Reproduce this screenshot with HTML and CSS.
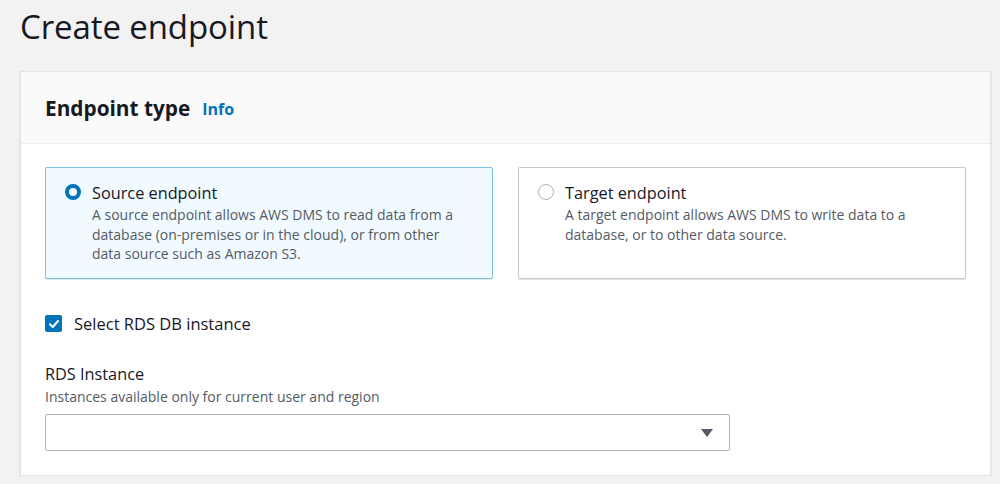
FILE: index.html
```html
<!DOCTYPE html>
<html>
<head>
<meta charset="utf-8">
<link rel="stylesheet" href="styles.css">
</head>
<body>
<div class="page">
  <h1 class="title">Create endpoint</h1>
  <section class="card">
    <header class="card-head">
      <h2>Endpoint type</h2>
      <a class="info">Info</a>
    </header>
    <div class="card-body">
      <div class="tiles">
        <div class="tile selected">
          <span class="radio on"></span>
          <div class="tile-text">
            <div class="tile-title">Source endpoint</div>
            <div class="tile-desc">A source endpoint allows AWS DMS to read data from a database (on-premises or in the cloud), or from other data source such as Amazon S3.</div>
          </div>
        </div>
        <div class="tile">
          <span class="radio"></span>
          <div class="tile-text">
            <div class="tile-title">Target endpoint</div>
            <div class="tile-desc">A target endpoint allows AWS DMS to write data to a database, or to other data source.</div>
          </div>
        </div>
      </div>
      <label class="check">
        <span class="box"><svg width="12" height="12" viewBox="0 0 12 12"><path d="M2 6.2 L4.8 9 L10 3" fill="none" stroke="#fff" stroke-width="2" stroke-linecap="round" stroke-linejoin="round"/></svg></span>
        <span>Select RDS DB instance</span>
      </label>
      <div class="field">
        <div class="field-label">RDS Instance</div>
        <div class="field-hint">Instances available only for current user and region</div>
        <div class="select"><span class="caret"></span></div>
      </div>
    </div>
  </section>
</div>
</body>
</html>
```
FILE: styles.css
```css
html, body {
  margin: 0;
  padding: 0;
  background: #f2f2f3;
  font-family: "Open Sans", "Noto Sans", sans-serif;
  color: #16191f;
}
.page {
  padding: 0 9px 0 20px;
}
.title {
  margin: 0;
  padding-top: 6px;
  height: 65px;
  font-size: 33px;
  font-weight: 400;
  line-height: 42px;
  letter-spacing: -0.1px;
}
.card {
  background: #fff;
  border: 1px solid #e4e4e4;
  box-shadow: 0 1px 1px rgba(0,0,0,0.25);
  width: 971px;
  box-sizing: border-box;
}
.card-head {
  background: #fafafa;
  border-bottom: 1px solid #eaeded;
  height: 72px;
  box-sizing: border-box;
  display: flex;
  align-items: center;
  padding: 0 24px;
  gap: 12px;
}
.card-head h2 {
  margin: 0;
  font-size: 20.8px;
  font-weight: 700;
  letter-spacing: 0;
}
.info {
  color: #0073bb;
  font-weight: 700;
  font-size: 16px;
  margin-top: 2px;
}
.card-body {
  padding: 23px 24px 24px 24px;
}
.tiles {
  display: flex;
  gap: 25px;
}
.tile {
  flex: 1;
  height: 112px;
  box-sizing: border-box;
  border: 1px solid #c8c8c8;
  border-radius: 2px;
  display: flex;
  gap: 11px;
  padding: 13px 20px 13px 19px;
  box-shadow: 0 1px 1px rgba(0,0,0,0.12);
}
.tile.selected {
  background: #f1faff;
  border-color: #7fc0e5;
}
.radio {
  flex: none;
  width: 14px;
  height: 14px;
  border-radius: 50%;
  border: 1.5px solid #aab7b8;
  margin-top: 3px;
  box-sizing: content-box;
  background: #fff;
}
.radio.on {
  border: 4.5px solid #0073bb;
  width: 8px;
  height: 8px;
}
.tile-title {
  font-size: 16.3px;
  line-height: 24px;
}
.tile-desc {
  font-size: 14px;
  line-height: 19.5px;
  color: #545b64;
  margin-top: 0;
}
.check {
  display: flex;
  align-items: center;
  gap: 12px;
  margin-top: 33px;
  font-size: 16.5px;
}
.box {
  width: 17px;
  height: 17px;
  background: #0073bb;
  border-radius: 2px;
  display: flex;
  align-items: center;
  justify-content: center;
}
.field {
  margin-top: 28px;
}
.field-label {
  font-size: 16.3px;
  line-height: 22px;
}
.field-hint {
  font-size: 14px;
  line-height: 20px;
  color: #545b64;
  margin-top: 2px;
}
.select {
  margin-top: 7px;
  width: 685px;
  height: 37px;
  box-sizing: border-box;
  border: 1px solid #aab7b8;
  border-radius: 2px;
  background: #fff;
  display: flex;
  align-items: center;
  justify-content: flex-end;
  padding-right: 16px;
}
.caret {
  width: 0;
  height: 0;
  border-left: 6px solid transparent;
  border-right: 6px solid transparent;
  border-top: 8px solid #545b64;
}
```
